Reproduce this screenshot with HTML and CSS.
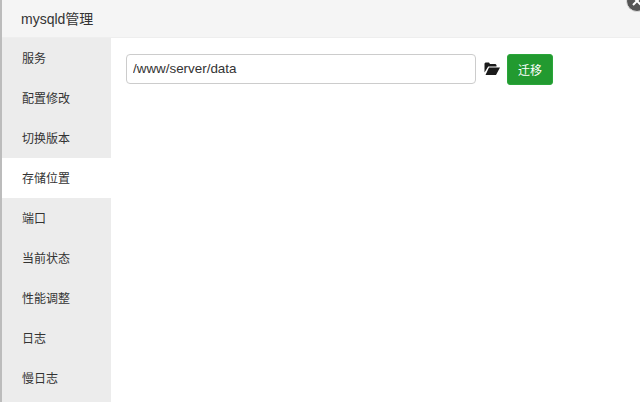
FILE: index.html
```html
<!DOCTYPE html>
<html lang="zh">
<head>
<meta charset="utf-8">
<title>mysqld管理</title>
<link rel="stylesheet" href="styles.css">
</head>
<body>
<div class="layer">
  <header class="title">mysqld管理</header>
  <div class="main">
    <nav class="side">
      <div class="item">服务</div>
      <div class="item">配置修改</div>
      <div class="item">切换版本</div>
      <div class="item active">存储位置</div>
      <div class="item">端口</div>
      <div class="item">当前状态</div>
      <div class="item">性能调整</div>
      <div class="item">日志</div>
      <div class="item">慢日志</div>
    </nav>
    <section class="content">
      <input class="path" type="text" value="/www/server/data">
      <svg class="folder" width="16" height="13" viewBox="0 0 16 13"><path fill="#1a1a1a" d="M1.500 13h10.500l4-7.500H5zM0.500 10.500V1.500l1-1h3.500l1 1.500h5.500l1 1V4.500H4.200z"/></svg>
      <button class="btn">迁移</button>
    </section>
  </div>
</div>
<div class="close"><svg width="12" height="12" viewBox="0 0 12 12"><path d="M2 2l8 8M10 2l-8 8" stroke="#fff" stroke-width="2"/></svg></div>
</body>
</html>
```
FILE: styles.css
```css
* { box-sizing: border-box; }
html, body { margin: 0; height: 100%; overflow: hidden; }
body { font-family: "Liberation Sans", "Noto Sans CJK SC", sans-serif; background: #fff; color: #333; }
.layer { height: 402px; display: flex; flex-direction: column; border-left: 2px solid #bcbcbc; }
.title { height: 38px; flex: none; background: #f5f5f5; border-bottom: 1px solid #eee; font-size: 14px; line-height: 38px; padding-left: 19px; color: #333; }
.main { flex: 1; display: flex; min-height: 0; }
.side { width: 109px; flex: none; background: #ececec; }
.item { height: 40px; padding-top: 2px; line-height: 39px; padding-left: 20px; font-size: 12px; color: #333; }
.item.active { background: #fff; }
.content { flex: 1; display: flex; align-items: flex-start; padding: 16px 0 0 15px; }
.path { width: 350px; height: 30px; border: 1px solid #ccc; border-radius: 4px; padding: 0 6px 2px; font: 13.400px "Liberation Sans", sans-serif; color: #333; }
.folder { margin: 8px 0 0 8px; }
.btn { width: 46px; height: 31px; margin-left: 7px; background: #229a30; border: 1px solid #2aa63a; border-radius: 3px; color: #fff; font: 12px "Noto Sans CJK SC", sans-serif; padding: 0; }
.close { position: absolute; top: -10px; right: -8px; width: 22px; height: 22px; border-radius: 50%; background: #555; border: 1px solid #ddd; display: flex; align-items: center; justify-content: center; }
```
